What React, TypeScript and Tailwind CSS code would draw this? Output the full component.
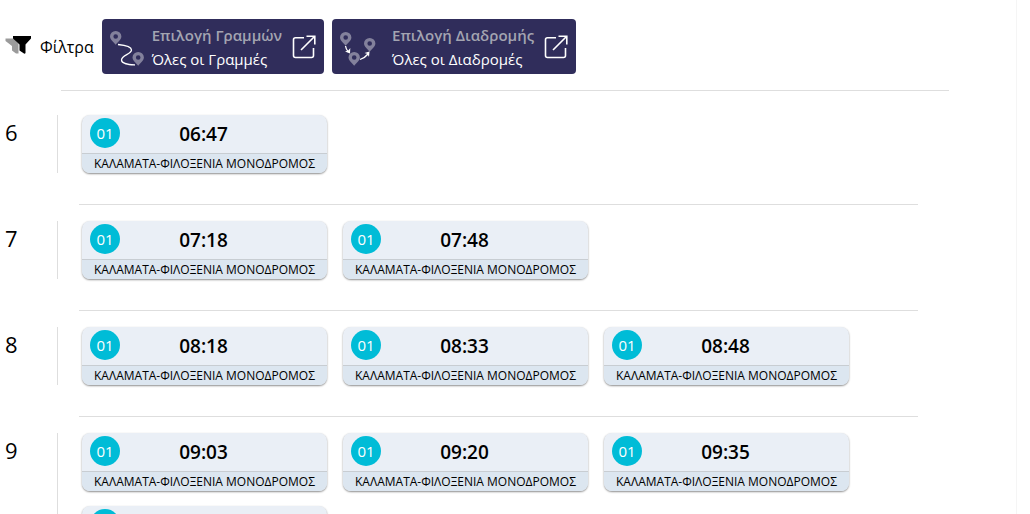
import type { ReactNode } from "react";

type Trip = {
  line: string;
  time: string;
  route: string;
};

type HourGroup = {
  hour: number;
  trips: Trip[];
};

const ROUTE = "ΚΑΛΑΜΑΤΑ-ΦΙΛΟΞΕΝΙΑ ΜΟΝΟΔΡΟΜΟΣ";

const trip = (time: string): Trip => ({ line: "01", time, route: ROUTE });

const HOURS: HourGroup[] = [
  { hour: 6, trips: [trip("06:47")] },
  { hour: 7, trips: [trip("07:18"), trip("07:48")] },
  { hour: 8, trips: [trip("08:18"), trip("08:33"), trip("08:48")] },
  { hour: 9, trips: [trip("09:03"), trip("09:20"), trip("09:35"), trip("09:50")] },
];

function FilterIcon() {
  return (
    <svg width="27" height="22" viewBox="0 0 27 22" aria-hidden>
      <path d="M0.500 2.500H9L13.500 8v9.500h-2.500L7 14.500V10L0.500 5z" fill="#9b9b9b" />
      <path d="M8 0h18v2.500L20.500 8.500v8.500q-.5 1-1.500.5L14.500 14.500V8.500L8 2.500z" fill="#000" />
    </svg>
  );
}

function Pin({ x, y }: { x: number; y: number }) {
  return (
    <path
      transform={`translate(${x} ${y})`}
      fillRule="evenodd"
      fill="#83819c"
      d="M5.700 0A5.600 5.600 0 0 0 0 5.500C0 8.600 3.700 10.800 5.700 13.800 7.700 10.800 11.400 8.600 11.400 5.500A5.600 5.600 0 0 0 5.700 0ZM5.700 3.200a2.300 2.300 0 1 1 0 4.600 2.300 2.300 0 0 1 0-4.600Z"
    />
  );
}

function LinesIcon() {
  return (
    <svg width="36" height="38" viewBox="0 0 36 38" fill="none" aria-hidden>
      <Pin x={0} y={3} />
      <Pin x={22.500} y={24} />
      <path d="M8 16.500C13 17 21.500 18.500 21.500 22C21.500 26 11.500 27.500 11.500 32C11.500 36 19 36.500 25 37" stroke="#fff" strokeWidth="1.300" />
    </svg>
  );
}

function RoutesIcon() {
  return (
    <svg width="46" height="38" viewBox="0 0 46 38" fill="none" aria-hidden>
      <Pin x={0} y={4} />
      <Pin x={24} y={10} />
      <Pin x={8.500} y={24} />
      <path d="M5.500 18c.3 2.500 1.500 4.500 3 6M20 31.500c3.500-1 6-3 8-5.500" stroke="#fff" strokeWidth="1.300" />
      <path d="M5 23.500l5 2 .3-5.500-2 2.500zM24.500 25l5-1.500-.5 5.500-1.500-3z" fill="#fff" />
    </svg>
  );
}

function OpenIcon() {
  return (
    <svg width="24" height="24" viewBox="0 0 24 24" fill="none" stroke="#fff" strokeWidth="1.600" aria-hidden>
      <path d="M12 2.800H3.500a2 2 0 0 0-2 2v15.700a2 2 0 0 0 2 2h16a2 2 0 0 0 2-2V13" />
      <path d="M14.500 1.200h8.300v8.300M22.500 1.500L9 15" />
    </svg>
  );
}

function FilterButton({ icon, title, value }: { icon: ReactNode; title: string; value: string }) {
  return (
    <button
      type="button"
      className="flex h-[55px] cursor-pointer items-center rounded-[4px] bg-[#302d5b] px-2 text-left text-[15px] leading-6 whitespace-nowrap text-white"
    >
      {icon}
      <span className="ml-[6px] flex flex-col pt-px">
        <span className="font-semibold text-[#a3a4b1]">{title}</span>
        <span>{value}</span>
      </span>
      <span className="ml-[10px]">
        <OpenIcon />
      </span>
    </button>
  );
}

function TripCard({ line, time, route }: Trip) {
  return (
    <article className="flex w-[245px] flex-col overflow-hidden rounded-[8px] bg-[#eaeff6] shadow-[0_1px_2px_rgba(0,0,0,0.45)]">
      <div className="grid h-[38px] grid-cols-[30px_1fr_30px] items-start pt-[3px] pr-[10px] pl-2">
        <span className="grid size-[30px] place-items-center rounded-full bg-[#00bcd7] text-[15px] font-medium text-white">
          {line}
        </span>
        <span className="text-center text-[19px] leading-8 font-semibold">{time}</span>
      </div>
      <div className="h-5 border-t border-[#c8cdd2] bg-[#dce6f0] text-center text-[12px] leading-5 whitespace-nowrap">
        {route}
      </div>
    </article>
  );
}

export default function App() {
  return (
    <div className="h-screen overflow-hidden bg-white font-['Open_Sans','Noto_Sans',sans-serif] text-black">
      <main className="mr-[13px] min-h-screen border-r border-[#f5f5f5] pt-[19px]">
        <header className="flex items-center gap-2 pl-[5px]">
          <div className="flex items-center gap-2">
            <FilterIcon />
            <span className="text-[16px]">Φίλτρα</span>
          </div>
          <FilterButton icon={<LinesIcon />} title="Επιλογή Γραμμών" value="Όλες οι Γραμμές" />
          <FilterButton icon={<RoutesIcon />} title="Επιλογή Διαδρομής" value="Όλες οι Διαδρομές" />
        </header>

        <hr className="mt-4 mr-[67px] ml-[61px] border-[#dedede]" />

        <div className="pt-6">
          {HOURS.map(({ hour, trips }) => (
            <section key={hour} className="mb-4">
              <div className="flex">
                <h2 className="w-[57px] shrink-0 pt-px pl-[5px] text-[22px] leading-8">{hour}</h2>
                <div className="flex flex-1 flex-wrap gap-x-4 gap-y-[15px] border-l border-[#dedede] pl-6">
                  {trips.map((t) => (
                    <TripCard key={t.time} {...t} />
                  ))}
                </div>
              </div>
              <hr className="mt-[31px] mr-[98px] ml-[79px] border-[#dedede]" />
            </section>
          ))}
        </div>
      </main>
    </div>
  );
}
